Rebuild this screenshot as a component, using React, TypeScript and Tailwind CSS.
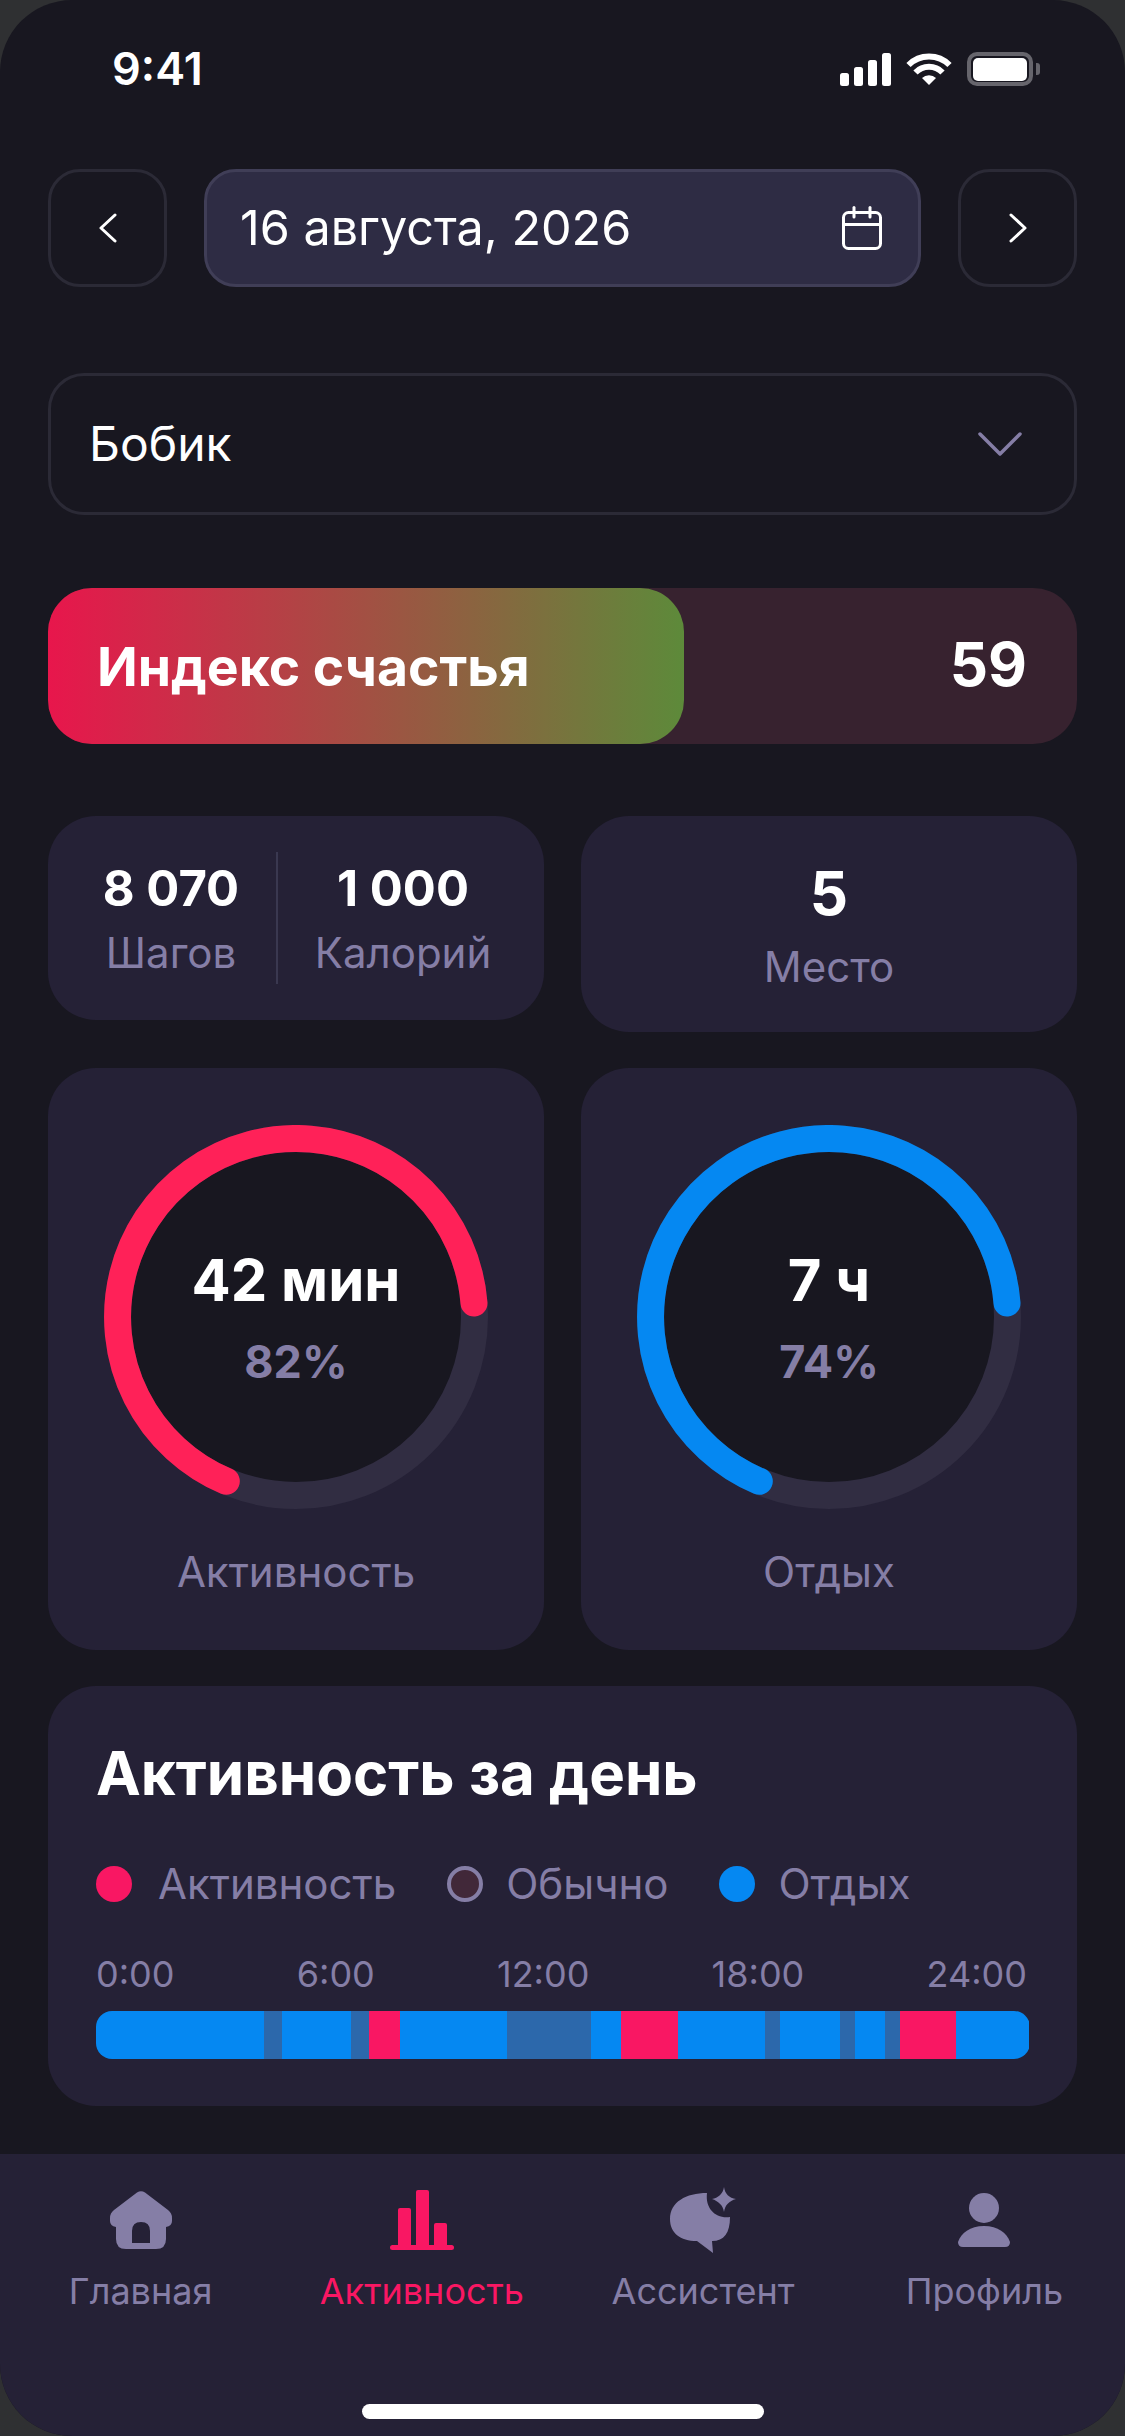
import type { ReactNode } from "react";

const SEGMENTS = [
  { w: 168, c: "bg-[#0588f2]" },
  { w: 18, c: "bg-[#2c68ab]" },
  { w: 69, c: "bg-[#0588f2]" },
  { w: 18, c: "bg-[#2c68ab]" },
  { w: 31, c: "bg-[#f91763]" },
  { w: 107, c: "bg-[#0588f2]" },
  { w: 84, c: "bg-[#2c68ab]" },
  { w: 30, c: "bg-[#0588f2]" },
  { w: 57, c: "bg-[#f91763]" },
  { w: 87, c: "bg-[#0588f2]" },
  { w: 15, c: "bg-[#2c68ab]" },
  { w: 60, c: "bg-[#0588f2]" },
  { w: 15, c: "bg-[#2c68ab]" },
  { w: 30, c: "bg-[#0588f2]" },
  { w: 15, c: "bg-[#2c68ab]" },
  { w: 56, c: "bg-[#f91763]" },
  { w: 73, c: "bg-[#0588f2]" },
];

function StatusBar() {
  return (
    <div className="flex h-[169px] shrink-0 items-start justify-between pl-[112px] pr-[85px] pt-[52px]">
      <span className="text-[45px] leading-[34px] font-semibold text-white">9:41</span>
      <div className="flex items-start">
        <svg width="51" height="33" viewBox="0 0 51 33" fill="#fff" className="mt-px">
          <rect x="0" y="20" width="9" height="13" rx="2.5" />
          <rect x="14" y="14" width="9" height="19" rx="2.5" />
          <rect x="28" y="7" width="9" height="26" rx="2.5" />
          <rect x="42" y="0" width="9" height="33" rx="2.5" />
        </svg>
        <svg width="46" height="33" viewBox="0 0 46 33" fill="none" stroke="#fff" strokeWidth="6" className="ml-[15px]">
          <path d="M2.5 13 A29 29 0 0 1 43.5 13" />
          <path d="M9.5 20.5 A19 19 0 0 1 36.5 20.5" />
          <path d="M23 33 L16 26 A10 10 0 0 1 30 26 Z" fill="#fff" stroke="none" />
        </svg>
        <div className="ml-[15px] flex h-[34px] w-[66px] items-center justify-center rounded-[10px] border-[4px] border-[#66656c]">
          <div className="h-[23px] w-[54px] rounded-[5px] bg-white" />
        </div>
        <div className="ml-[3px] mt-[11px] h-[12px] w-[4px] rounded-r-[3px] bg-[#66656c]" />
      </div>
    </div>
  );
}

function NavButton({ children }: { children: ReactNode }) {
  return (
    <button className="flex h-[118px] w-[119px] shrink-0 items-center justify-center rounded-[32px] border-[3px] border-[#2b2a36]">
      {children}
    </button>
  );
}

function DateRow() {
  return (
    <div className="flex gap-[37px]">
      <NavButton>
        <svg width="18" height="30" viewBox="0 0 18 30" fill="none" stroke="#fff" strokeWidth="3" strokeLinecap="round" strokeLinejoin="round">
          <path d="M16 2 L2 15 L16 28" />
        </svg>
      </NavButton>
      <div className="flex h-[118px] flex-1 items-center justify-between rounded-[32px] border-[3px] border-[#403e57] bg-[#2e2c44] pl-[33px] pr-[36px]">
        <span className="text-[48.5px] leading-none font-normal text-white">16 августа, 2026</span>
        <svg width="40" height="44" viewBox="0 0 40 44" fill="none" stroke="#fff" strokeWidth="3" strokeLinecap="round">
          <rect x="1.5" y="6.5" width="37" height="36" rx="5" />
          <path d="M2 18.5 H38" />
          <path d="M12 1.5 V11" />
          <path d="M28 1.5 V11" />
        </svg>
      </div>
      <NavButton>
        <svg width="18" height="30" viewBox="0 0 18 30" fill="none" stroke="#fff" strokeWidth="3" strokeLinecap="round" strokeLinejoin="round">
          <path d="M2 2 L16 15 L2 28" />
        </svg>
      </NavButton>
    </div>
  );
}

function Ring({ color, value, percent }: { color: string; value: string; percent: string }) {
  return (
    <div className="relative h-[384px] w-[384px]">
      <svg width="384" height="384" viewBox="0 0 384 384" fill="none">
        <circle cx="192" cy="192" r="170" fill="#181720" />
        <circle cx="192" cy="192" r="178.5" stroke="#312d42" strokeWidth="27" />
        <path d="M122.3 356.3 A178.5 178.5 0 1 1 370 178" stroke={color} strokeWidth="27" strokeLinecap="round" />
      </svg>
      <div className="absolute inset-0 flex flex-col items-center pt-[125px]">
        <span className="text-[58px] leading-[60px] font-bold text-white">{value}</span>
        <span className="mt-[28px] text-[45px] leading-[48px] font-bold text-[#857ea6]">{percent}</span>
      </div>
    </div>
  );
}

function RingCard({ color, value, percent, label }: { color: string; value: string; percent: string; label: string }) {
  return (
    <div className="flex h-[582px] flex-col items-center rounded-[48px] bg-[#252136] pt-[57px]">
      <Ring color={color} value={value} percent={percent} />
      <span className="mt-[38px] text-[42px] leading-[50px] font-normal text-[#857ea6]">{label}</span>
    </div>
  );
}

function Legend({ label, dot, tight }: { label: string; dot: string; tight?: boolean }) {
  return (
    <div className={`flex items-center ${tight ? "gap-[23px]" : "gap-[26px]"}`}>
      <span className={`h-[36px] w-[36px] rounded-full ${dot}`} />
      <span className="text-[42px] leading-[50px] font-normal text-[#857ea6]">{label}</span>
    </div>
  );
}

function DayCard() {
  return (
    <div className="flex h-[420px] flex-col rounded-[48px] bg-[#252136] pl-[48px] pr-[47px] pt-[54px]">
      <h2 className="text-[60px] leading-[66px] font-bold text-white">Активность за день</h2>
      <div className="mt-[53px] flex gap-[51px]">
        <Legend label="Активность" dot="bg-[#f91763]" />
        <Legend label="Обычно" dot="border-[4px] border-[#857ea6] bg-[#412839]" tight />
        <Legend label="Отдых" dot="bg-[#0588f2]" tight />
      </div>
      <div className="mt-[43px] flex justify-between pr-[3px] text-[36px] leading-[44px] font-normal text-[#857ea6]">
        <span>0:00</span>
        <span>6:00</span>
        <span>12:00</span>
        <span>18:00</span>
        <span>24:00</span>
      </div>
      <div className="mt-[15px] flex h-[48px] overflow-hidden rounded-[16px]">
        {SEGMENTS.map((s, i) => (
          <div key={i} className={s.c} style={{ width: s.w }} />
        ))}
      </div>
    </div>
  );
}

function HomeIcon() {
  return (
    <svg width="62" height="58" viewBox="0 0 62 58" fill="#857ea6">
      <path
        fillRule="evenodd"
        d="M27 1.5 Q31 -1 35 1.5 L58 19 Q62 22 62 27 V30 Q62 35 56 36 V48 Q56 58 46 58 H16 Q6 58 6 48 V36 Q0 35 0 30 V27 Q0 22 4 19 Z M22 52 H40 V40 Q40 31 31 31 Q22 31 22 40 Z"
      />
    </svg>
  );
}

function ChartIcon() {
  return (
    <svg width="64" height="60" viewBox="0 0 64 60" fill="#f91763">
      <rect x="8" y="18" width="13" height="42" rx="2" />
      <rect x="26" y="0" width="13" height="60" rx="2" />
      <rect x="44" y="33" width="13" height="27" rx="2" />
      <rect x="0" y="55" width="64" height="5" rx="2.5" />
    </svg>
  );
}

function AssistantIcon() {
  return (
    <svg width="66" height="66" viewBox="0 0 66 66" fill="#857ea6">
      <path d="M37 6 C16 6 0 15 0 32 C0 46 10 54 27 54 L43 66 L42 54 C54 54 60 46 60 30 C46 32 35 22 37 6 Z" />
      <path d="M54 0 C55 7 59 11 66 12 C59 14 55 18 54 25 C53 18 48 14 42 12 C48 11 53 7 54 0 Z" />
    </svg>
  );
}

function ProfileIcon() {
  return (
    <svg width="52" height="54" viewBox="0 0 52 54" fill="#857ea6">
      <circle cx="26" cy="15" r="15" />
      <path d="M26 33 C40 33 49 40 52 49 Q52 54 47 54 H5 Q0 54 0 49 C3 40 12 33 26 33 Z" />
    </svg>
  );
}

function Tab({ icon, label, active }: { icon: ReactNode; label: string; active?: boolean }) {
  return (
    <div className="flex flex-col items-center">
      <div className="flex h-[66px] items-center">{icon}</div>
      <span className={`mt-[16px] text-[36px] leading-[44px] font-normal ${active ? "text-[#f91763]" : "text-[#857ea6]"}`}>{label}</span>
    </div>
  );
}

export default function App() {
  return (
    <div className="h-[2436px] w-[1125px] bg-[#2f3032] font-['Inter',sans-serif]">
      <div className="flex h-full flex-col overflow-hidden rounded-[72px] bg-[#181720]">
        <StatusBar />
        <main className="flex flex-1 flex-col px-[48px]">
          <DateRow />

          <div className="mt-[86px] flex h-[142px] items-center justify-between rounded-[36px] border-[3px] border-[#2b2a36] pl-[38px] pr-[52px]">
            <span className="text-[48px] leading-none font-normal text-white">Бобик</span>
            <svg width="44" height="24" viewBox="0 0 44 24" fill="none" stroke="#857ea6" strokeWidth="3.5" strokeLinecap="round" strokeLinejoin="round">
              <path d="M2 2 L22 22 L42 2" />
            </svg>
          </div>

          <div className="mt-[73px] flex h-[156px] items-center rounded-[44px] bg-[#37222f]">
            <div className="flex h-full w-[636px] items-center rounded-[44px] bg-[linear-gradient(90deg,#e8164c,#5d8a3a)] pl-[49px] pt-[2px]">
              <span className="text-[53.5px] leading-none font-bold text-white">Индекс счастья</span>
            </div>
            <span className="ml-auto mb-[4px] pr-[50px] text-[60px] leading-none font-bold text-white">59</span>
          </div>

          <div className="mt-[72px] grid grid-cols-2 items-start gap-x-[37px]">
            <div className="flex h-[204px] items-center rounded-[48px] bg-[#252136]">
              <div className="flex w-[228px] flex-col items-center pl-[18px] pt-[2px]">
                <span className="text-[49px] leading-[56px] font-bold text-white">8 070</span>
                <span className="mt-[11px] text-[42px] leading-[50px] font-normal text-[#857ea6]">Шагов</span>
              </div>
              <div className="h-[132px] w-[2px] bg-[#3a3850]" />
              <div className="flex flex-1 flex-col items-center pr-[16px] pt-[2px]">
                <span className="text-[49px] leading-[56px] font-bold text-white">1 000</span>
                <span className="mt-[11px] text-[42px] leading-[50px] font-normal text-[#857ea6]">Калорий</span>
              </div>
            </div>
            <div className="flex h-[216px] flex-col items-center rounded-[48px] bg-[#252136] pt-[42px]">
              <span className="text-[60px] leading-[70px] font-bold text-white">5</span>
              <span className="mt-[14px] text-[42px] leading-[50px] font-normal text-[#857ea6]">Место</span>
            </div>
          </div>

          <div className="mt-[36px] grid grid-cols-2 gap-x-[37px]">
            <RingCard color="#ff2158" value="42 мин" percent="82%" label="Активность" />
            <RingCard color="#0588f2" value="7 ч" percent="74%" label="Отдых" />
          </div>

          <div className="mt-[36px]">
            <DayCard />
          </div>
        </main>

        <nav className="flex h-[282px] shrink-0 flex-col bg-[#252136]">
          <div className="grid grid-cols-4 pt-[33px]">
            <Tab icon={<HomeIcon />} label="Главная" />
            <Tab icon={<ChartIcon />} label="Активность" active />
            <Tab icon={<AssistantIcon />} label="Ассистент" />
            <Tab icon={<ProfileIcon />} label="Профиль" />
          </div>
          <div className="mx-auto mt-[91px] h-[15px] w-[402px] rounded-full bg-white" />
        </nav>
      </div>
    </div>
  );
}
